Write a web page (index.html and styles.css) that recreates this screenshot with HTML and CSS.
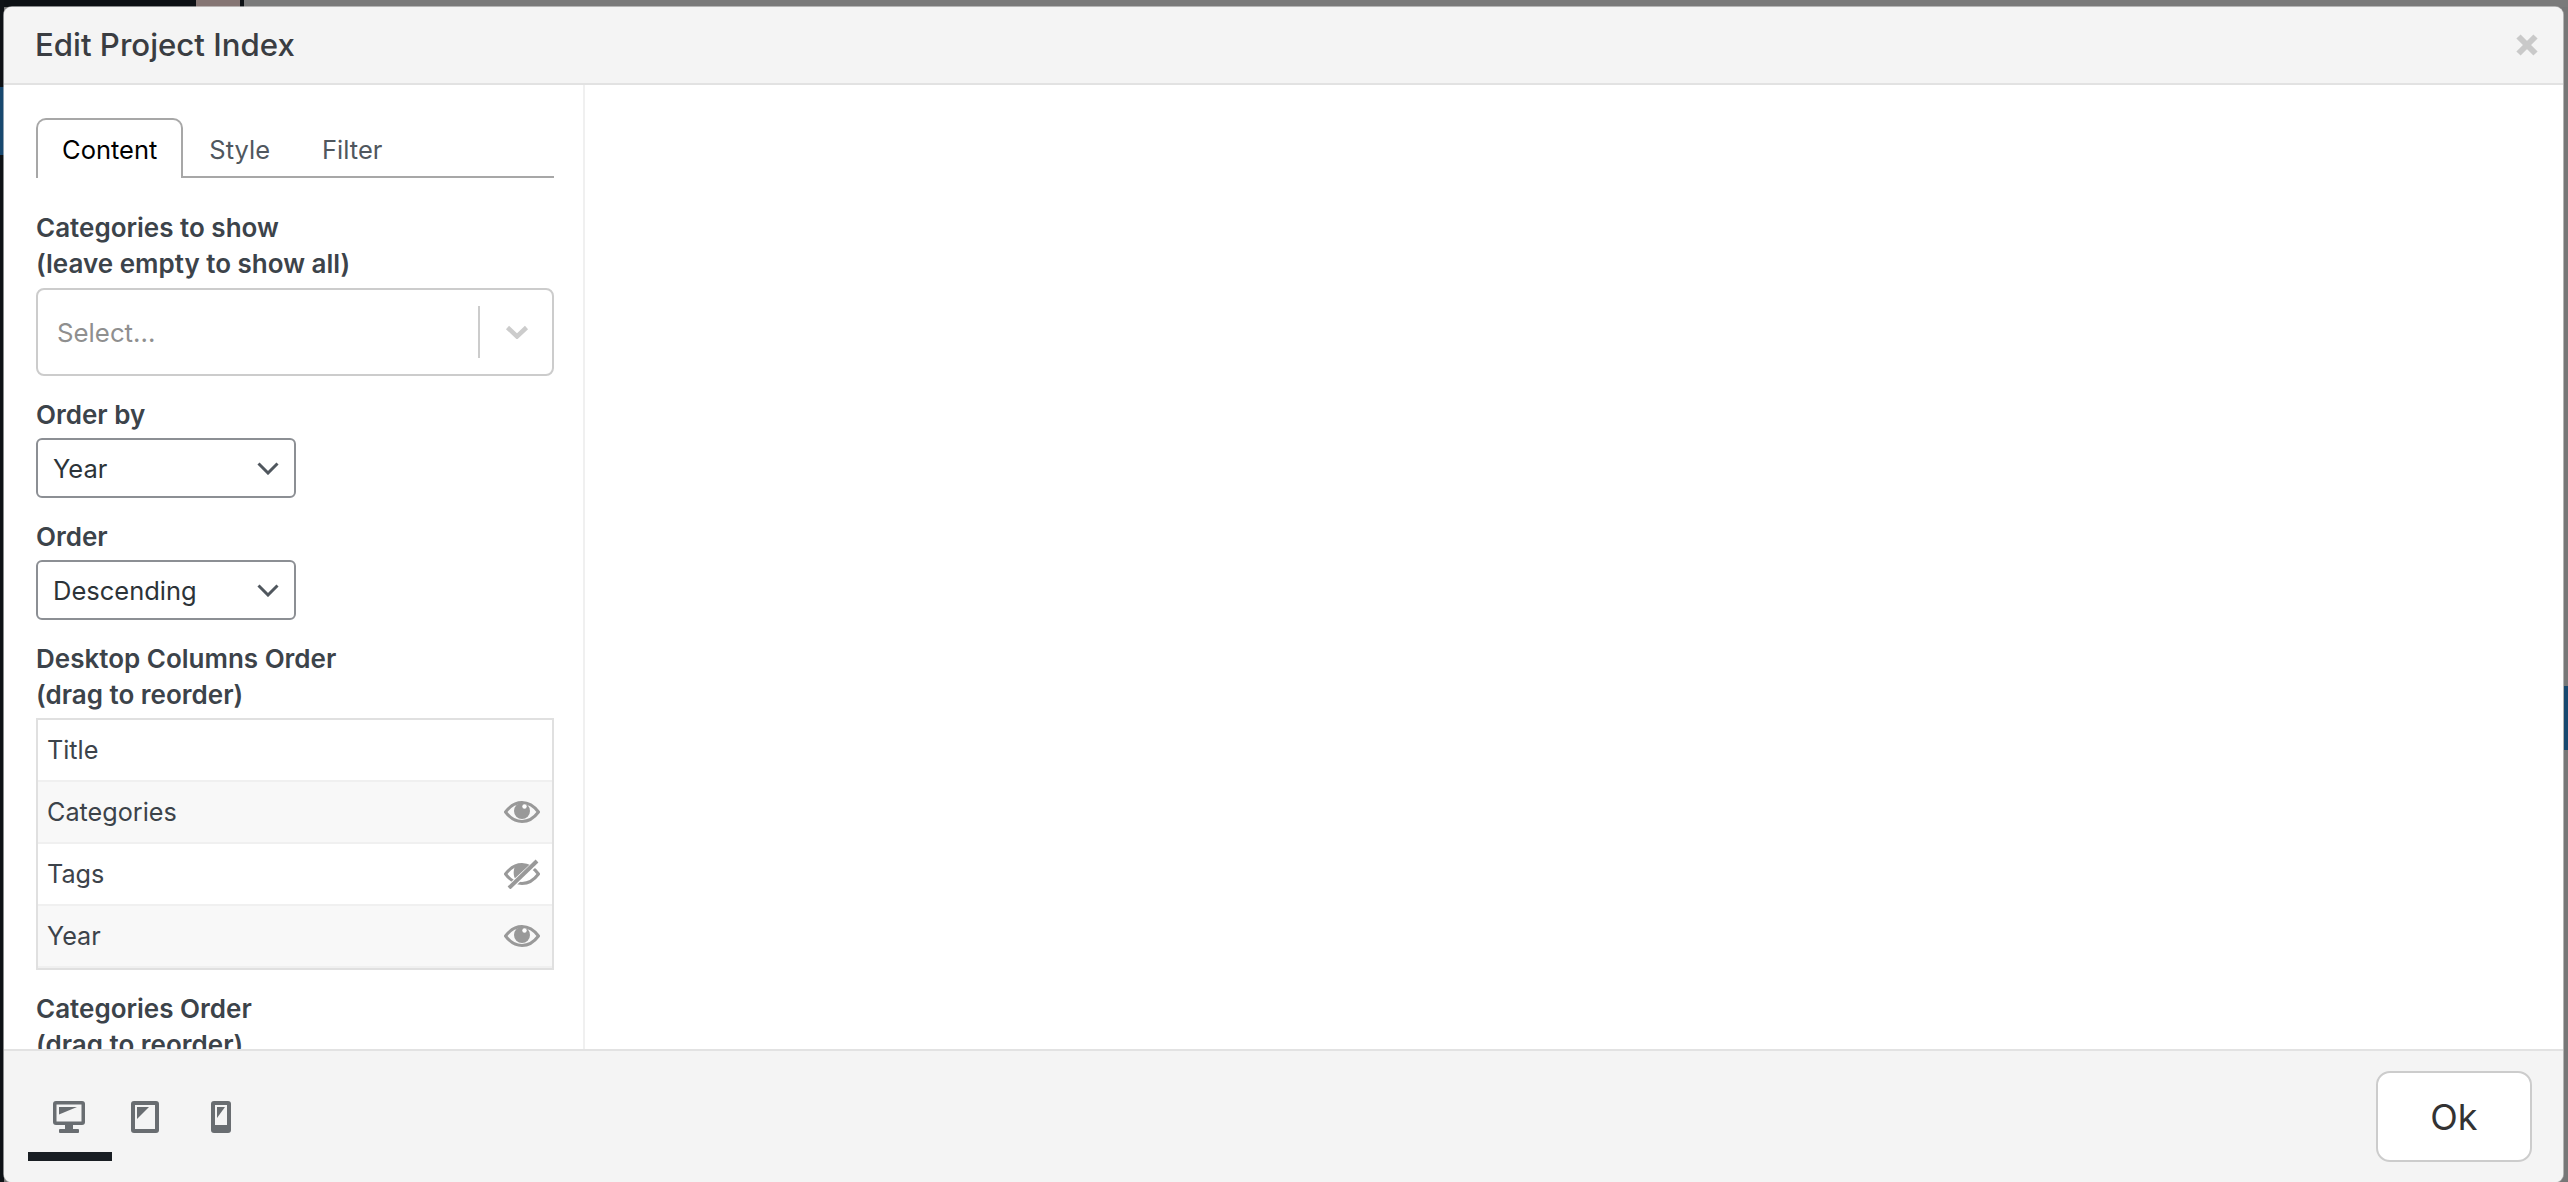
FILE: index.html
```html
<!DOCTYPE html>
<html lang="en">
<head>
<meta charset="utf-8">
<title>Edit Project Index</title>
<link rel="stylesheet" href="styles.css">
</head>
<body>
<div class="modal">
  <header class="modal-header">
    <h1 class="modal-title">Edit Project Index</h1>
    <svg class="close" viewBox="0 0 24 24" aria-label="Close"><path d="M3.500 3.500L20.500 20.500M20.500 3.500L3.500 20.500"/></svg>
  </header>
  <div class="modal-body">
    <aside class="sidebar">
      <nav class="tabs">
        <span class="tab tab-active">Content</span>
        <span class="tab">Style</span>
        <span class="tab">Filter</span>
      </nav>
      <label class="field-label label-first">Categories to show<br>(leave empty to show all)</label>
      <div class="multi">
        <span class="multi-placeholder">Select...</span>
        <span class="multi-sep"></span>
        <svg class="multi-chev" viewBox="0 0 24 14"><path d="M2.5 2.5L12 11.5L21.5 2.5"/></svg>
      </div>
      <label class="field-label">Order by</label>
      <div class="select"><span>Year</span><svg class="select-chev" viewBox="0 0 22 13"><path d="M1.5 1.5L11 11L20.5 1.5"/></svg></div>
      <label class="field-label">Order</label>
      <div class="select"><span>Descending</span><svg class="select-chev" viewBox="0 0 22 13"><path d="M1.5 1.5L11 11L20.5 1.5"/></svg></div>
      <label class="field-label">Desktop Columns Order<br>(drag to reorder)</label>
      <ul class="sort-list">
        <li class="sort-row"><span>Title</span></li>
        <li class="sort-row"><span>Categories</span>
          <svg class="eye" viewBox="0 0 36 22"><path class="eye-line" d="M1.5 11C6 5 11.5 1.5 18 1.5S30 5 34.5 11C30 17 24.500 20.500 18 20.500S6 17 1.500 11Z"/><circle class="eye-fill" cx="18" cy="10" r="8"/><circle class="eye-glint" cx="20.500" cy="5.500" r="2.200"/></svg>
        </li>
        <li class="sort-row"><span>Tags</span>
          <svg class="eye eye-off" viewBox="0 0 36 30"><path class="eye-line" d="M1.500 15C6 9 11.500 5.500 18 5.500S30 9 34.500 15C30 21 24.500 24.500 18 24.500S6 21 1.500 15Z"/><path class="eye-fill" d="M11 7H27L13 22C9 19 9 12 11 7Z"/><path class="eye-cut" d="M5 29L33 3"/><path class="eye-slash" d="M5 29L33 2"/></svg>
        </li>
        <li class="sort-row"><span>Year</span>
          <svg class="eye" viewBox="0 0 36 22"><path class="eye-line" d="M1.5 11C6 5 11.5 1.5 18 1.5S30 5 34.5 11C30 17 24.500 20.500 18 20.500S6 17 1.500 11Z"/><circle class="eye-fill" cx="18" cy="10" r="8"/><circle class="eye-glint" cx="20.500" cy="5.500" r="2.200"/></svg>
        </li>
      </ul>
      <label class="field-label">Categories Order<br>(drag to reorder)</label>
    </aside>
    <main class="preview"></main>
  </div>
  <footer class="modal-footer">
    <div class="devices">
      <span class="device device-active">
        <svg class="device-icon" width="32" height="32" viewBox="0 0 32 32"><rect class="d-body" width="32" height="24" rx="3"/><rect class="d-screen" x="3.500" y="3.500" width="25" height="17"/><path class="d-body" d="M6 6H24L6 13.500Z"/><rect class="d-body" x="12" y="24" width="8" height="5"/><rect class="d-body" x="6" y="28" width="20" height="4" rx="1"/></svg>
      </span>
      <span class="device">
        <svg class="device-icon" width="28" height="32" viewBox="0 0 28 32"><rect class="d-body" width="28" height="32" rx="3"/><rect class="d-screen" x="4" y="4" width="20" height="24"/><path class="d-body" d="M6 6H18L6 18Z"/></svg>
      </span>
      <span class="device">
        <svg class="device-icon" width="20" height="32" viewBox="0 0 20 32"><rect class="d-body" width="20" height="32" rx="3"/><rect class="d-screen" x="4" y="4" width="12" height="20"/><path class="d-body" d="M6 6H14L6 17Z"/></svg>
      </span>
    </div>
    <button class="ok" type="button">Ok</button>
  </footer>
</div>
</body>
</html>
```
FILE: styles.css
```css
* { box-sizing: border-box; }
html, body { height: 100%; margin: 0; }
body {
  padding: 7px 5px 0 4px;
  overflow: hidden;
  font-family: Inter, "Liberation Sans", sans-serif;
  color: #3c434a;
  background-color: #777;
  background-image:
    linear-gradient(#18486f, #18486f),
    linear-gradient(#18486f, #18486f),
    linear-gradient(#0e1216, #0e1216),
    linear-gradient(90deg, #0c1014 0 196px, #857573 196px 240px, #0c1014 240px 244px, #7a7a7a 244px);
  background-repeat: no-repeat;
  background-position: 0 87px, 100% 686px, 0 0, 0 0;
  background-size: 4px 68px, 4px 64px, 4px 100%, 100% 7px;
}
.modal {
  height: 100%;
  display: flex;
  flex-direction: column;
  background: #fff;
  border-radius: 8px;
  overflow: hidden;
  box-shadow: 0 0 0 1px rgba(220, 220, 220, .6);
}
.modal-header {
  flex: none;
  height: 78px;
  padding: 0 24px 0 31px;
  display: flex;
  align-items: center;
  justify-content: space-between;
  background: #f4f4f4;
  border-bottom: 2px solid #e2e2e2;
}
.modal-title { margin: 0; font-size: 31.200px; font-weight: 500; color: #3a3d42; }
.close { width: 24px; height: 24px; fill: none; stroke: #c9c9c9; stroke-width: 6; }
.modal-body { flex: 1; min-height: 0; display: flex; }
.sidebar {
  flex: none;
  width: 581px;
  padding: 33px 29px 0 32px;
  border-right: 2px solid #f0f0f0;
  overflow: hidden;
}
.preview { flex: 1; }
.tabs { display: flex; height: 60px; border-bottom: 2px solid #a7a7a7; }
.tab {
  height: 60px;
  padding: 0 24px;
  display: flex;
  align-items: center;
  border: 2px solid transparent;
  border-bottom: 0;
  font-size: 25.500px;
  color: #50575e;
}
.tab-active {
  border-color: #a7a7a7;
  border-radius: 10px 10px 0 0;
  background: #fff;
  color: #000;
}
.field-label {
  display: block;
  margin: 21px 0 5px;
  font-size: 26px;
  line-height: 36px;
  font-weight: 600;
  color: #3c434a;
}
.label-first { margin: 32px 0 6px; }
.multi {
  height: 88px;
  display: flex;
  align-items: center;
  padding: 0 23px 0 19px;
  border: 2px solid #ccc;
  border-radius: 8px;
}
.multi-placeholder { flex: 1; font-size: 25.800px; color: #8f8f8f; }
.multi-sep { width: 2px; height: 52px; background: #ccc; margin-right: 25px; }
.multi-chev { width: 24px; height: 14px; fill: none; stroke: #ccc; stroke-width: 4.500; }
.select {
  width: 260px;
  height: 60px;
  display: flex;
  align-items: center;
  justify-content: space-between;
  padding: 0 15px 0 15px;
  border: 2px solid #8c8f94;
  border-radius: 6px;
  font-size: 25.500px;
  color: #2c3338;
}
.select-chev { width: 22px; height: 13px; fill: none; stroke: #50575e; stroke-width: 3; }
.sort-list { list-style: none; margin: 0; padding: 0; border: 2px solid #e0e0e0; }
.sort-row {
  height: 62px;
  padding: 0 12px 0 9px;
  display: flex;
  align-items: center;
  justify-content: space-between;
  border-bottom: 2px solid #f0f0f0;
  font-size: 25.200px;
  color: #3c434a;
  background: #fff;
}
.sort-row:nth-child(even) { background: #f8f8f8; }
.eye { width: 36px; height: 22px; fill: none; }
.eye-off { height: 30px; }
.eye-line { fill: none; stroke: #999; stroke-width: 3; }
.eye-fill { fill: #999; }
.eye-glint { fill: #fff; }
.eye-cut { stroke: #fff; stroke-width: 6; }
.eye-slash { stroke: #999; stroke-width: 4; }
.modal-footer {
  flex: none;
  height: 133px;
  padding: 20px 31px 0 27px;
  display: flex;
  justify-content: space-between;
  align-items: flex-start;
  background: #f4f4f4;
  border-top: 2px solid #e2e2e2;
}
.devices { display: flex; margin-top: 30px; }
.device {
  position: relative;
  width: 76px;
  height: 60px;
  display: flex;
  justify-content: center;
  align-items: flex-start;
}
.device-active::after {
  content: "";
  position: absolute;
  left: -3px;
  right: -5px;
  bottom: 0;
  height: 9px;
  background: #191e23;
}
.device-icon { display: block; }
.d-body { fill: #696d71; }
.d-screen { fill: #f4f4f4; }
.ok {
  width: 156px;
  height: 91px;
  padding: 0;
  background: #fff;
  border: 2px solid #ccc;
  border-radius: 14px;
  font-family: Inter, "Liberation Sans", sans-serif;
  font-size: 36px;
  color: #333;
}
```
